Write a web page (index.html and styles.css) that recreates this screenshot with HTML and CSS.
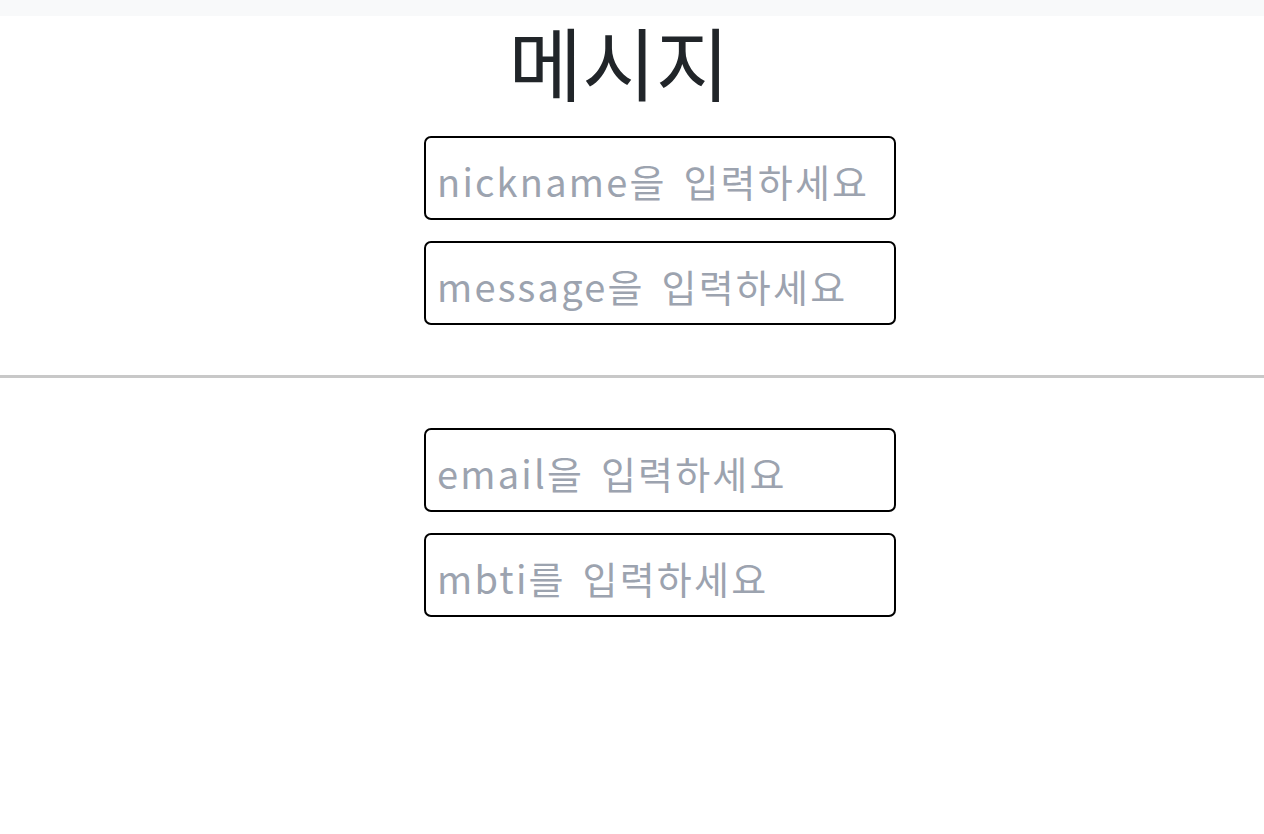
FILE: index.html
```html
<!DOCTYPE html>
<html lang="ko">
<head>
    <meta charset="UTF-8">
    <meta name="viewport" content="width=device-width, initial-scale=1.0">
    <title>메시지</title>
    <link rel="stylesheet" href="styles.css">
</head>
<body>
    <div class="top-bar"></div>
    <div class="page">
        <h1 class="title">메시지</h1>
        <form class="msg-form">
            <input type="text" class="field" name="nickname" placeholder="nickname을 입력하세요">
            <input type="text" class="field" name="message" placeholder="message을 입력하세요">
        </form>
    </div>
    <hr class="divider">
    <div class="page">
        <form class="msg-form lower">
            <input type="text" class="field" name="email" placeholder="email을 입력하세요">
            <input type="text" class="field" name="mbti" placeholder="mbti를 입력하세요">
        </form>
    </div>
</body>
</html>
```

FILE: styles.css
```css
body {
    font-family: "Noto Sans CJK KR", "Noto Sans", sans-serif;
    background-color: #ffffff;
    color: #212529;
    margin: 0;
}
.top-bar {
    height: 16px;
    background-color: #f8f9fa; /* light strip */
}
.page {
    display: flex;
    flex-direction: column;
    align-items: center;
}
.title {
    font-size: 80px;
    font-weight: 400;
    line-height: 1.1;
    margin: 0 26px 32px 0;
}
.msg-form {
    display: flex;
    flex-direction: column;
    gap: 21px;
    margin-left: 56px;
}
.msg-form.lower {
    margin-top: 50px;
}
.field {
    width: 472px;
    height: 84px;
    box-sizing: border-box;
    padding: 4px 11px 0;
    border: 2px solid #000;
    border-radius: 7px;
    font-size: 38px;
    letter-spacing: 2.2px;
    word-spacing: 4px;
    font-family: "Noto Sans CJK KR", "Noto Sans", sans-serif;
}
.field::placeholder {
    color: #9ca3af;
}
.divider {
    margin: 50px 0 0;
    border: none;
    border-top: 3px solid #c8c8c8;
}
```
